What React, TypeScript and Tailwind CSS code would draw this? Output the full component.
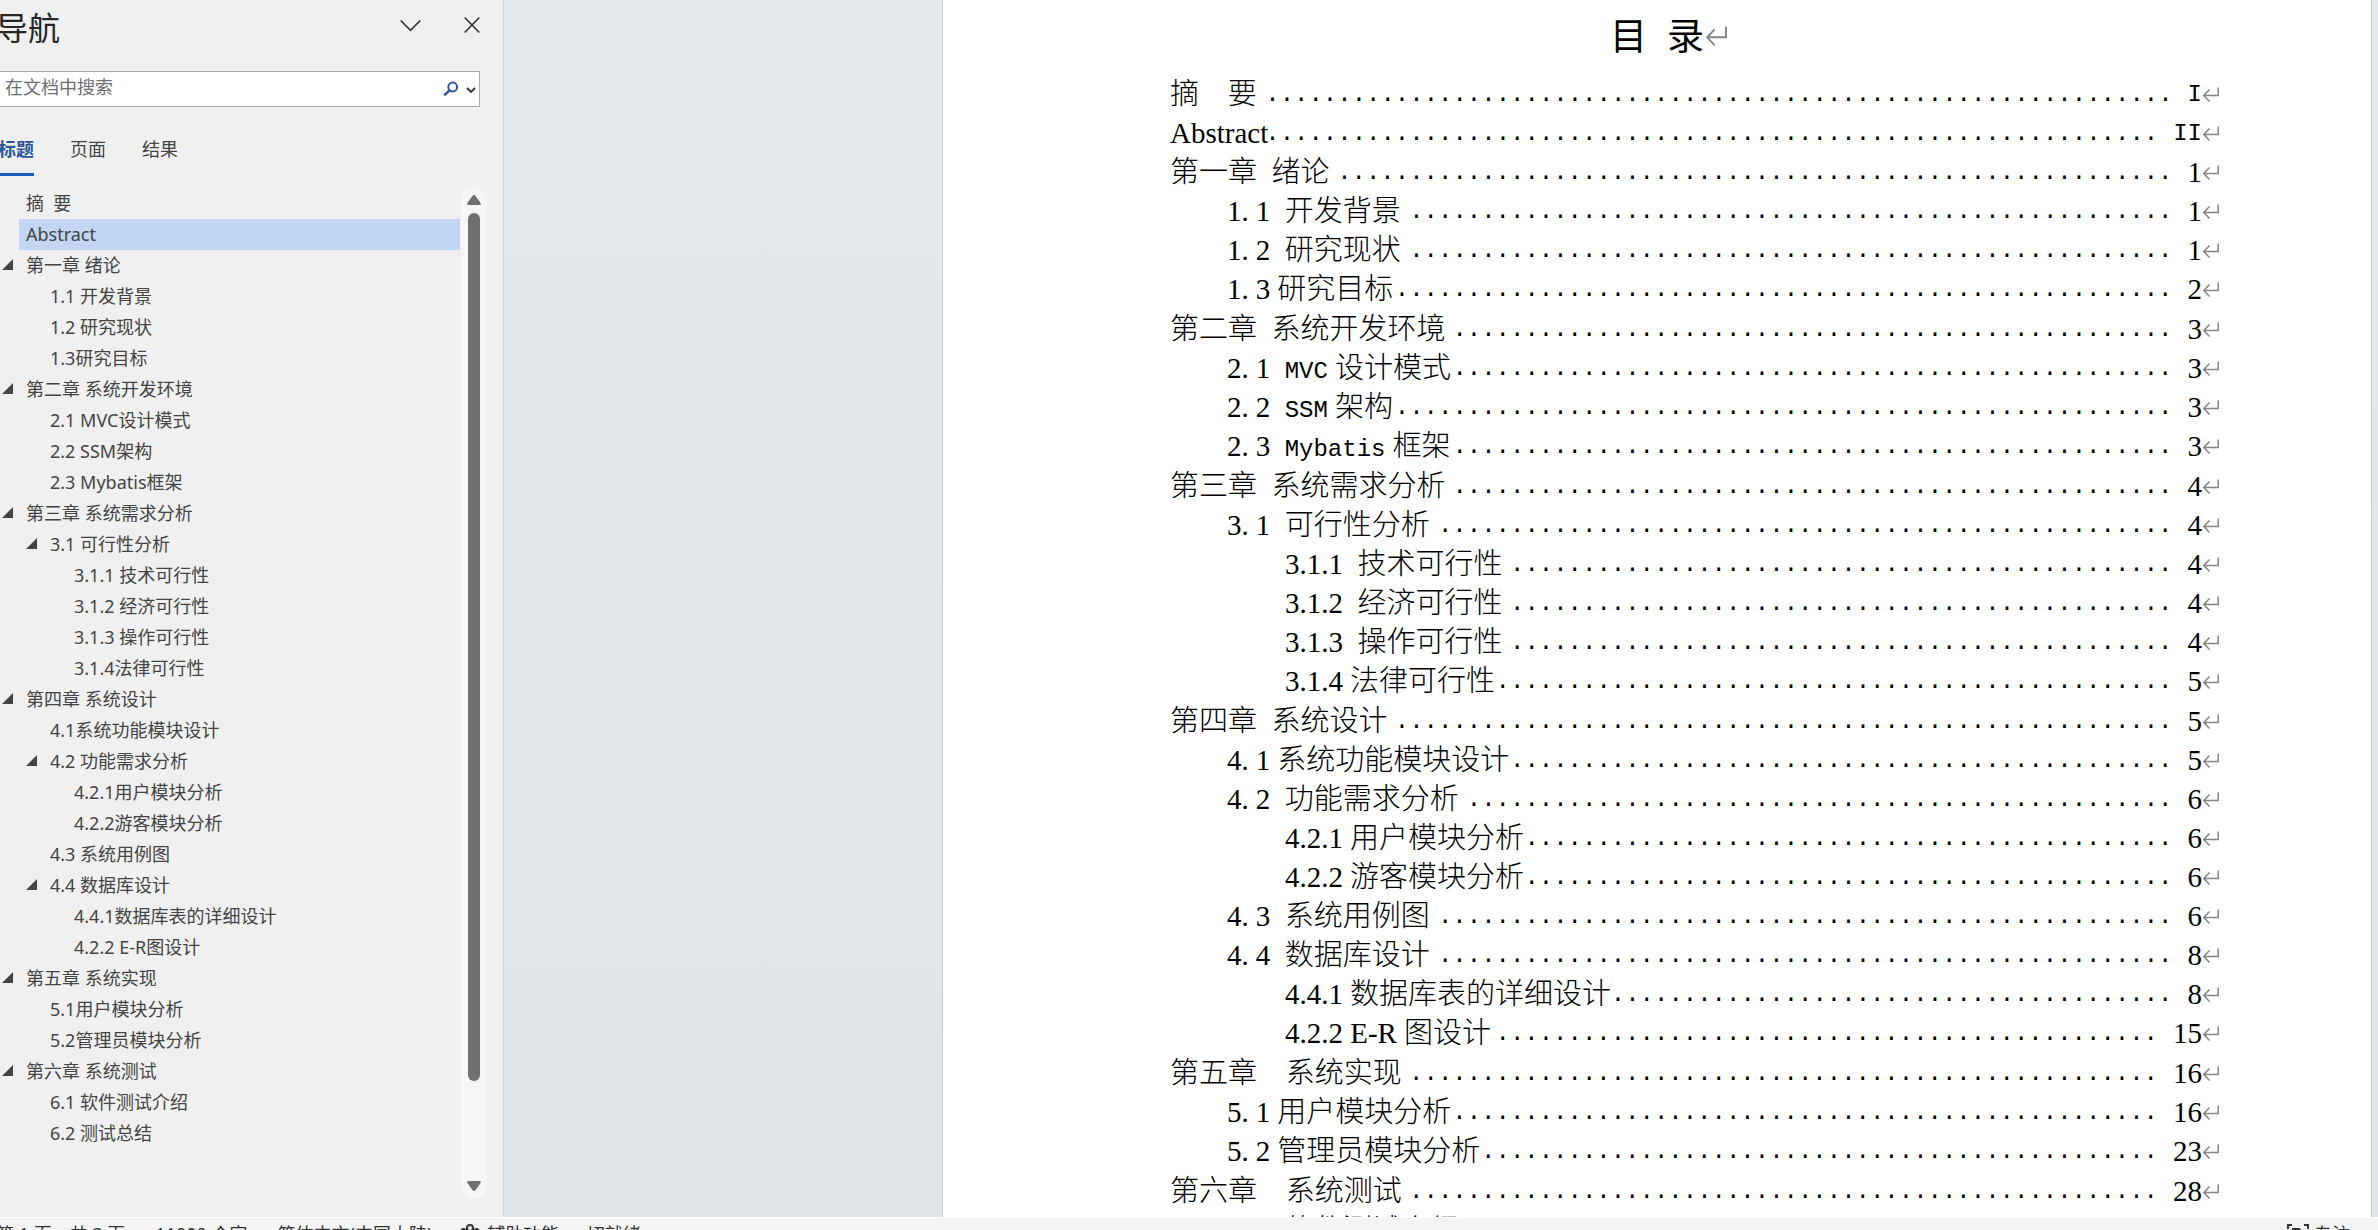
import React, { useLayoutEffect, useRef, useState } from 'react';

type Font = 'song' | 'roman';
type Entry = { title: string; toc?: string; level: 1 | 2 | 3; page: string; font?: Font; parent?: boolean };

// `toc` is set where the heading is spaced differently in the table of contents
const chapters: Entry[][] = [
  [
    { title: '摘  要', level: 1, page: 'I' },
    { title: 'Abstract', level: 1, page: 'II', font: 'roman' },
    { title: '第一章 绪论', level: 1, page: '1', parent: true },
    { title: '1.1 开发背景', level: 2, page: '1' },
    { title: '1.2 研究现状', level: 2, page: '1' },
    { title: '1.3研究目标', level: 2, page: '2' },
  ],
  [
    { title: '第二章 系统开发环境', level: 1, page: '3', parent: true },
    { title: '2.1 MVC设计模式', level: 2, page: '3' },
    { title: '2.2 SSM架构', level: 2, page: '3' },
    { title: '2.3 Mybatis框架', level: 2, page: '3' },
  ],
  [
    { title: '第三章 系统需求分析', level: 1, page: '4', parent: true },
    { title: '3.1 可行性分析', level: 2, page: '4', parent: true },
    { title: '3.1.1 技术可行性', level: 3, page: '4', font: 'roman' },
    { title: '3.1.2 经济可行性', level: 3, page: '4', font: 'roman' },
    { title: '3.1.3 操作可行性', level: 3, page: '4', font: 'roman' },
    { title: '3.1.4法律可行性', level: 3, page: '5', font: 'roman' },
  ],
  [
    { title: '第四章 系统设计', level: 1, page: '5', parent: true },
    { title: '4.1系统功能模块设计', level: 2, page: '5' },
    { title: '4.2 功能需求分析', level: 2, page: '6', parent: true },
    { title: '4.2.1用户模块分析', level: 3, page: '6', font: 'roman' },
    { title: '4.2.2游客模块分析', level: 3, page: '6', font: 'roman' },
    { title: '4.3 系统用例图', level: 2, page: '6' },
    { title: '4.4 数据库设计', level: 2, page: '8', parent: true },
    { title: '4.4.1数据库表的详细设计', level: 3, page: '8', font: 'roman' },
    { title: '4.2.2 E-R图设计', level: 3, page: '15', font: 'roman' },
  ],
  [
    { title: '第五章 系统实现', toc: '第五章  系统实现', level: 1, page: '16', parent: true },
    { title: '5.1用户模块分析', level: 2, page: '16' },
    { title: '5.2管理员模块分析', level: 2, page: '23' },
  ],
  [
    { title: '第六章 系统测试', toc: '第六章  系统测试', level: 1, page: '28', parent: true },
    { title: '6.1 软件测试介绍', level: 2, page: '28' },
    { title: '6.2 测试总结', level: 2, page: '30' },
  ],
];

const navIndent = { 1: 'pl-0', 2: 'pl-6', 3: 'pl-12' };
const tocIndent = { 1: 'pl-0', 2: 'pl-[57px]', 3: 'pl-[115px]' };
const tabs = ['标题', '页面', '结果'];

const roman = "font-['Liberation_Serif','Noto_Sans_CJK_SC',serif] text-[29px]";
const mono = "font-['Liberation_Mono',monospace] text-[24px]";
const DOT_WIDTH = 14.4; // advance of one mono character at 24px

const ParagraphMark: React.FC<{ className: string }> = ({ className }) => (
  <svg viewBox="0 0 16 15" className={className} fill="none" stroke="#858585" strokeWidth="1.5" aria-hidden="true">
    <path d="M15.2 0.5V8.5H1M6.5 2.5L0.9 8.5L6.5 14.5" />
  </svg>
);

// Splits a heading into runs: CJK, digits, dots, spaces and Latin each have their own advance width
const TocText: React.FC<{ text: string; font?: Font }> = ({ text, font = 'song' }) => {
  const runs = text.match(/[\u4e00-\u9fff]+|\d+|\.|\s+|[A-Za-z-]+/g) ?? [];
  return (
    <span className="shrink-0 whitespace-pre">
      {runs.map((run, i) => {
        if (/[\u4e00-\u9fff]/.test(run)) {
          const tight = i > 0 && !/\s/.test(runs[i - 1]);
          return <span key={i} className={tight ? 'ml-[7px]' : ''}>{run}</span>;
        }
        if (/\s/.test(run)) {
          const beforeLatin = font === 'roman' && /[A-Z]/.test(runs[i + 1] ?? '');
          return <span key={i} className={beforeLatin ? roman : mono}>{run}</span>;
        }
        if (font === 'roman' || /\d/.test(run)) return <span key={i} className={roman}>{run}</span>;
        if (run === '.') return <span key={i} className={`${roman} pr-[7px]`}>.</span>;
        return <span key={i} className={mono}>{run}</span>;
      })}
    </span>
  );
};

// Fills the free width with whole dots, aligned to the page number
const Leader: React.FC = () => {
  const ref = useRef<HTMLSpanElement>(null);
  const [count, setCount] = useState(0);

  useLayoutEffect(() => {
    const el = ref.current;
    if (!el) return;
    const measure = () => setCount(Math.max(0, Math.floor(el.clientWidth / DOT_WIDTH)));
    measure();
    const observer = new ResizeObserver(measure);
    observer.observe(el);
    return () => observer.disconnect();
  }, []);

  return (
    <span ref={ref} aria-hidden="true" className={`mr-[15px] -ml-[5px] flex min-w-0 flex-1 justify-end ${mono}`}>
      {'.'.repeat(count)}
    </span>
  );
};

const TocRow: React.FC<{ entry: Entry }> = ({ entry }) => (
  <li className={`flex h-[39px] leading-[39px] ${tocIndent[entry.level]}`}>
    <a href="#toc" className="flex min-w-0 flex-1">
      <TocText text={entry.toc ?? entry.title} font={entry.font} />
      <Leader />
      <span className={/I/.test(entry.page) ? mono : roman}>{entry.page}</span>
    </a>
    <ParagraphMark className="mt-3 ml-px h-[15px] w-4 shrink-0" />
  </li>
);

const NavigationPane: React.FC = () => {
  const [tab, setTab] = useState('标题');
  const [selected, setSelected] = useState('Abstract');

  return (
    <aside className="flex w-[504px] shrink-0 flex-col border-r border-[#cfd1d4] bg-[#f0f0f0] text-[18px] text-[#444444]">
      <header className="flex h-[71px] shrink-0 items-start justify-between pr-[23px]">
        <h2 className="-ml-1 pt-2 text-[32px] leading-10 text-[#262626]">导航</h2>
        <div className="flex pt-4">
          <button aria-label="窗格选项" className="mr-[43px] h-[18px] w-[21px]">
            <svg viewBox="0 0 21 18" fill="none" stroke="#333" strokeWidth="1.6"><path d="M0.7 4.5L10.5 14.3L20.3 4.5" /></svg>
          </button>
          <button aria-label="关闭" className="h-[18px] w-4">
            <svg viewBox="0 0 16 18" fill="none" stroke="#333" strokeWidth="1.6"><path d="M0.7 1.5L15.3 16.5M15.3 1.5L0.7 16.5" /></svg>
          </button>
        </div>
      </header>

      {/* Search */}
      <div className="mr-[23px] flex h-9 shrink-0 items-center border-y border-r border-[#ababab] bg-white">
        <input aria-label="在文档中搜索" placeholder="在文档中搜索" className="h-full min-w-0 flex-1 pb-1 pl-[5px] outline-none placeholder:text-[#6e6e6e]" />
        <button aria-label="搜索" className="h-4 w-4">
          <svg viewBox="0 0 16 16" fill="none" stroke="#2b579a" strokeWidth="2"><circle cx="9.7" cy="6" r="4.4" /><path d="M6.5 9.3L1.2 14.4" strokeWidth="2.4" /></svg>
        </button>
        <button aria-label="搜索选项" className="mr-[3px] ml-[7px] h-4 w-[10px]">
          <svg viewBox="0 0 10 16" fill="none" stroke="#333" strokeWidth="1.8"><path d="M1 7L5 11L9 7" /></svg>
        </button>
      </div>

      {/* Tabs */}
      <div role="tablist" className="-ml-[2px] flex h-[81px] shrink-0 items-start gap-9 pt-[29px]">
        {tabs.map(t => (
          <button
            key={t}
            role="tab"
            aria-selected={tab === t}
            onClick={() => setTab(t)}
            className={`h-10 border-b-3 pb-2.5 leading-[27px] ${tab === t ? 'border-[#185abd] font-bold text-[#2b579a]' : 'border-transparent'}`}
          >
            {t}
          </button>
        ))}
      </div>

      {/* Heading tree */}
      <div className="flex min-h-0 flex-1 pr-4 pb-[19px]">
        <ul className="min-w-0 flex-1">
          {chapters.flat().map((h, i) => (
            <li key={i} className={navIndent[h.level]}>
              <div className="flex h-[31px]">
                <button aria-label="折叠" tabIndex={h.parent ? 0 : -1} className="flex w-[19px] shrink-0 items-start pt-[9px] pl-0.5">
                  {h.parent && <svg viewBox="0 0 11 11" className="h-[11px] w-[11px]" fill="#444"><path d="M11 0V11H0Z" /></svg>}
                </button>
                <button
                  onClick={() => setSelected(h.title)}
                  className={`min-w-0 flex-1 pl-[7px] text-left leading-[31px] whitespace-pre ${selected === h.title ? 'bg-[#c2d5f2]' : ''}`}
                >
                  {h.title}
                </button>
              </div>
            </li>
          ))}
        </ul>
        <div className="ml-px flex w-[26px] flex-col items-center rounded-full bg-[#f6f6f6] py-[7px]">
          <svg viewBox="0 0 14 10" className="h-2.5 w-3.5" fill="#6f6f6f"><path d="M7 0Q8 0 8.6 1L13.6 8Q14.4 10 12.6 10H1.4Q-0.4 10 0.4 8L5.4 1Q6 0 7 0Z" /></svg>
          <div className="mt-2 mb-1 flex w-3 flex-1 flex-col"><div className="h-[90%] rounded-full bg-[#6f6f6f]" /></div>
          <svg viewBox="0 0 14 10" className="h-2.5 w-3.5" fill="#6f6f6f"><path d="M7 10Q8 10 8.6 9L13.6 2Q14.4 0 12.6 0H1.4Q-0.4 0 0.4 2L5.4 9Q6 10 7 10Z" /></svg>
        </div>
      </div>
    </aside>
  );
};

export default function App() {
  return (
    <div className="flex h-screen flex-col overflow-hidden bg-[#f4f4f4] font-['Noto_Sans','Noto_Sans_CJK_SC',sans-serif]">
      <div className="flex min-h-0 flex-1">
        <NavigationPane />
        <main className="flex min-w-0 flex-1 overflow-hidden bg-linear-to-b from-[#e6eaef] to-[#e0e4e9] pr-1.5 pl-[438px]">
          <article id="toc" className="min-w-0 flex-1 border-x border-[#c8cacd] bg-white pr-[152px] pl-[227px] text-[29px] font-light text-black font-['Liberation_Serif','Noto_Sans_CJK_SC',serif]">
            <h1 className="mr-[76px] flex h-[75px] items-start justify-center pt-[11px] pl-6 text-[37px] leading-[54px] font-normal">
              <span className="whitespace-pre">目<span className="inline-block w-5"> </span>录</span>
              <ParagraphMark className="mt-[15px] ml-0.5 h-5 w-[21px]" />
            </h1>
            <div className="space-y-px">
              {chapters.map((rows, i) => (
                <ul key={i}>{rows.map((entry, j) => <TocRow key={j} entry={entry} />)}</ul>
              ))}
            </div>
          </article>
        </main>
      </div>

      {/* Status bar */}
      <footer className="flex h-[13px] shrink-0 items-start border-t border-white pt-0.5 pr-7 text-[18px] leading-7 whitespace-pre text-[#333]">
        <span className="-ml-[4px]">第 1 页，共 3 页</span>
        <span className="ml-[30px]">11909 个字</span>
        <span className="ml-[30px]">简体中文(中国大陆)</span>
        <button className="ml-7 flex gap-[7px]">
          <svg viewBox="0 0 20 22" className="mt-1 h-[22px] w-5" fill="none" stroke="#333" strokeWidth="2">
            <circle cx="10" cy="4" r="3" />
            <path d="M7 6.5L3.5 5A2 2 0 0 0 2 8.5L7 11L5 18A2 2 0 0 0 8.5 19L10 15L11.5 19A2 2 0 0 0 15 18L13 11L18 8.5A2 2 0 0 0 16.5 5L13 6.5" />
          </svg>
          辅助功能: 一切就绪
        </button>
        <button className="ml-auto flex gap-[5px]">
          <svg viewBox="0 0 22 22" className="mt-1 h-[22px] w-[22px]" fill="none" stroke="#333" strokeWidth="2">
            <path d="M1 5V1H5M17 1H21V5M1 17V21H5M17 21H21V17M6 17V5H12L16 9V17ZM11 5V10H16" />
          </svg>
          专注
        </button>
      </footer>
    </div>
  );
}
